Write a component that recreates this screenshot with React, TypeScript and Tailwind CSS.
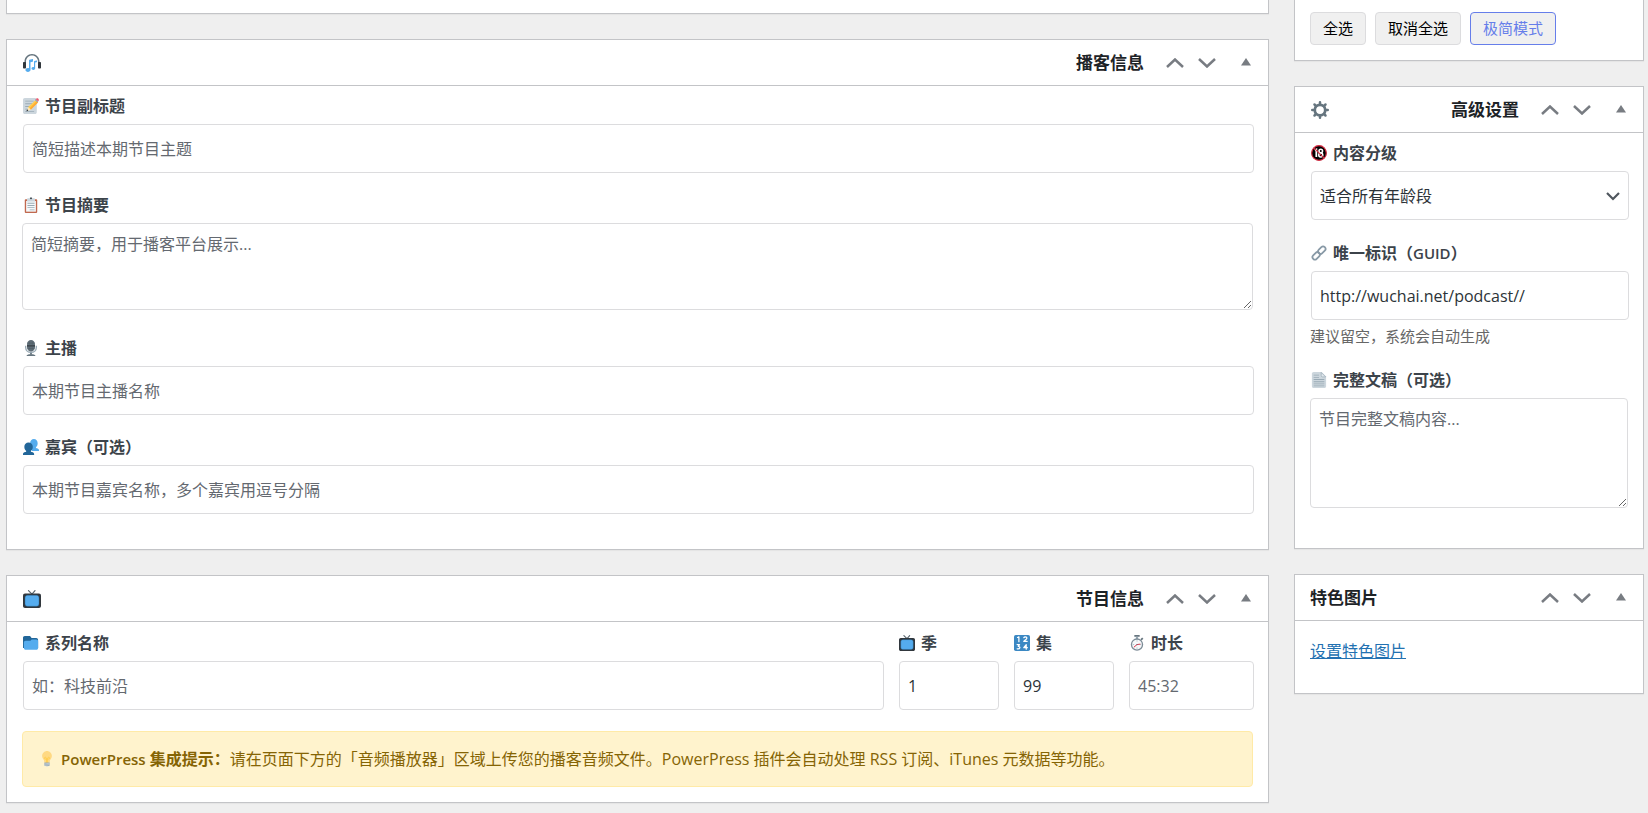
import type { ReactNode } from "react";

const inputClass =
  "ml-px block h-[49px] w-full rounded border border-[#dcdcde] bg-white px-2 text-base text-[#2c3338] placeholder:text-[#646970]";
const textareaClass =
  "block w-full resize-y rounded border border-[#dcdcde] bg-white p-2 text-base leading-6 text-[#2c3338] placeholder:text-[#646970]";

interface EmojiProps {
  large?: boolean;
  children: ReactNode;
}

function Emoji({ large, children }: EmojiProps) {
  return (
    <svg
      viewBox="0 0 36 36"
      aria-hidden="true"
      className={large ? "mx-px size-[18px] shrink-0" : "mx-px size-4 shrink-0"}
    >
      {children}
    </svg>
  );
}

function HeadphoneIcon() {
  return (
    <Emoji large>
      <path
        fill="#66757F"
        d="M18 0C9.716 0 3 6.716 3 15v9h3v-9C6 8 11.269 2.812 18 2.812 24.73 2.812 30 8 30 15v10l3-1v-9c0-8.284-6.716-15-15-15z"
      />
      <path
        fill="#31373D"
        d="M6 27c0 1.104-.896 2-2 2H2c-1.104 0-2-.896-2-2v-9c0-1.104.896-2 2-2h2c1.104 0 2 .896 2 2v9zm30 0c0 1.104-.896 2-2 2h-2c-1.104 0-2-.896-2-2v-9c0-1.104.896-2 2-2h2c1.104 0 2 .896 2 2v9z"
      />
      <path
        fill="#55ACEE"
        d="M19.182 10.016l-6.364 1.313c-.45.093-.818.544-.818 1.004v16.185c-.638-.227-1.341-.36-2.087-.36-2.785 0-5.042 1.755-5.042 3.922 0 2.165 2.258 3.827 5.042 3.827C12.649 35.905 14.922 34 15 32V16.39l4.204-.872c.449-.093.796-.545.796-1.004v-3.832c0-.458-.368-.759-.818-.666zm8 3.151l-4.297.865c-.45.093-.885.544-.885 1.003V26.44c0-.152-.878-.24-1.4-.24-2.024 0-3.633 1.276-3.633 2.852 0 1.574 1.658 2.851 3.683 2.851s3.677-1.277 3.677-2.851V17.035l2.875-.594c.45-.093.798-.545.798-1.005v-1.603c0-.459-.368-.76-.818-.666z"
      />
    </Emoji>
  );
}

function MemoIcon() {
  return (
    <Emoji>
      <path fill="#CCD6DD" d="M31 32c0 2.209-1.791 4-4 4H4c-2.209 0-4-1.791-4-4V4c0-2.209 1.791-4 4-4h23c2.209 0 4 1.791 4 4v28z" />
      <path fill="#99AAB5" d="M5 6h19v2H5zM5 12h16v2H5zM5 18h11v2H5zM5 24h7v2H5zM5 29h20v2H5z" />
      <path fill="#FFCC4D" d="M29 4l5 5-17 17-6-5z" />
      <path fill="#FFAC33" d="M31 7l3 3-17 17-3-3z" />
      <path fill="#99AAB5" d="M26.5 4.5l2-2L34 8l-2 2z" />
      <path fill="#EA596E" d="M28.5 2.5C30.5.5 33 0 34.5 1.5S36 5.5 34 8z" />
      <path fill="#FFE8B6" d="M11 20l7 6-8.5 3.5z" />
      <path fill="#292F33" d="M9.4 25.5l2.600 3-4.5 1.5z" />
    </Emoji>
  );
}

function ClipboardIcon() {
  return (
    <Emoji>
      <path fill="#C1694F" d="M32 34c0 1.104-.896 2-2 2H6c-1.104 0-2-.896-2-2V7c0-1.104.896-2 2-2h24c1.104 0 2 .896 2 2v27z" />
      <path fill="#F5F8FA" d="M7 9h22v24H7z" />
      <path fill="#CCD6DD" d="M25 3h-4c0-1.657-1.343-3-3-3s-3 1.343-3 3h-4c-1.104 0-2 .896-2 2v5h18V5c0-1.104-.896-2-2-2z" />
      <circle fill="#292F33" cx="18" cy="3" r="2" />
      <path fill="#99AAB5" d="M10 13h16v2H10zM10 18h16v2H10zM10 23h16v2H10zM15 28h11v2H15z" />
    </Emoji>
  );
}

function MicrophoneIcon() {
  return (
    <Emoji>
      <path fill="#66757F" d="M16 27h4v6h-4z" />
      <path fill="#66757F" d="M8 36c0-2.5 3-4 10-4s10 1.5 10 4z" />
      <path fill="none" stroke="#99AAB5" strokeWidth="3" d="M6 13v4c0 6.5 5 11 12 11s12-4.5 12-11v-4" />
      <path fill="#66757F" d="M18 0c-5 0-9 4-9 9v8c0 5 4 9 9 9s9-4 9-9V9c0-5-4-9-9-9z" />
      <path fill="#292F33" d="M9 12h18v2.5H9z" />
      <path stroke="#4B575F" strokeWidth="1.2" d="M14 2v22M18 0v26M22 2v22M10 7h16M10 19h16" />
    </Emoji>
  );
}

function BustsIcon() {
  return (
    <Emoji>
      <path
        fill="#55ACEE"
        d="M36 27v-2c0-2-2-3-5-4-1.5-.5-2-1.5-2-2.5 2.5-1.7 4-4.8 4-9C33 4 29.5 0 24.5 0S16 4 16 9.5c0 4 1 7 4 9v8.5z"
      />
      <path
        fill="#226699"
        d="M0 36v-2c0-2.5 2-3.5 5-4.5 2-.6 2.5-1.5 2.5-2.5C4.5 25.3 3 22 3 17.5 3 12 7 8 12.500 8S22 12 22 17.5c0 4.5-1.5 7.8-4.5 9.5 0 1 .5 1.9 2.5 2.5 3 1 5 2 5 4.5v2z"
      />
    </Emoji>
  );
}

function TvIcon({ large }: { large?: boolean }) {
  return (
    <Emoji large={large}>
      <path fill="none" stroke="#58656E" strokeWidth="2.4" strokeLinecap="round" d="M11 1.2l7 7 6-7" />
      <path fill="#31373D" d="M36 32c0 2.209-1.791 4-4 4H4c-2.209 0-4-1.791-4-4V11c0-2.209 1.791-4 4-4h28c2.209 0 4 1.791 4 4z" />
      <path
        fill="#55ACEE"
        stroke="#226699"
        strokeWidth=".8"
        d="M32 27c0 4-2 5.5-5 5.5H9c-3 0-5-1.5-5-5.5V16c0-4 2-5.5 5-5.5h18c3 0 5 1.5 5 5.5z"
      />
    </Emoji>
  );
}

function FolderIcon() {
  return (
    <Emoji>
      <path fill="#226699" d="M0 29V6c0-2.2 1.8-4 4-4h10c2.2 0 3 1 4 3s2 2 4 2h8c2 0 4 2 4 4v18z" />
      <path fill="#55ACEE" d="M30 10H20c-2 0-2 3-5 3H6c-2.2 0-4 1.8-4 4v12c0 2.2 1.8 4 4 4h24c2.2 0 4-1.8 4-4V14c0-2.2-1.8-4-4-4z" />
    </Emoji>
  );
}

function NumbersIcon() {
  return (
    <Emoji>
      <rect width="36" height="36" rx="4" fill="#3B88C3" />
      <g fill="none" stroke="#fff" strokeWidth="2.8" strokeLinecap="round" strokeLinejoin="round">
        <path d="M8 5.5L11 4v11" />
        <path d="M22 6c1-2.5 7-3 7 .5 0 3-4 4.5-7 8h7.5" />
        <path d="M7 21.5h5.5l-3 4c6 0 4.5 7-2.5 5.5" />
        <path d="M27.5 32V21.5l-5.5 7h8" />
      </g>
    </Emoji>
  );
}

function StopwatchIcon() {
  return (
    <Emoji>
      <path fill="#66757F" d="M12 0h12v4H12z" />
      <path fill="#99AAB5" d="M15.5 4h5v5h-5z" />
      <path stroke="#66757F" strokeWidth="4" d="M27 11l4-4" />
      <circle cx="18" cy="21.5" r="12.5" fill="#F5F8FA" stroke="#7D8C97" strokeWidth="3" />
      <path stroke="#99AAB5" strokeWidth="1.5" d="M18 12v3M18 28v3M8.5 21.5h3M24.5 21.5h3" />
      <path fill="none" stroke="#DD2E44" strokeWidth="2.2" d="M11 27.5l7-6 7.5-1" />
      <circle cx="18" cy="21.5" r="1.5" fill="#66757F" />
    </Emoji>
  );
}

function BulbIcon() {
  return (
    <Emoji>
      <path
        fill="#FFD983"
        d="M29 11.06c0 6.439-5 7.439-5 13.44 0 3.098-3.123 3.359-5.5 3.359-2.053 0-6.586-.779-6.586-3.361C11.914 18.5 7 17.5 7 11.06 7 5.029 12.285.14 18.083.14 23.883.14 29 5.029 29 11.06z"
      />
      <path fill="#CCD6DD" d="M22.167 32.5c0 .828-2.234 2.5-4.167 2.5s-4.167-1.672-4.167-2.5 2.233-.5 4.167-.5c1.933 0 4.167-.328 4.167.5z" />
      <path
        fill="none"
        stroke="#FFCC4D"
        strokeWidth="2"
        strokeLinecap="round"
        d="M17 27v-9c0-1.5-1-4-2.5-4S12 15 12 16s1 2 2.5 2h7c1.5 0 2.5-1 2.5-2s-1-2-2.5-2S19 16.5 19 18v9"
      />
      <path fill="#99AAB5" d="M12 26h12v6c0 1-1 2-2 2h-8c-1 0-2-1-2-2z" />
      <path stroke="#CCD6DD" strokeWidth="1.5" d="M12 29.5l12-2M12 32.5l12-2" />
    </Emoji>
  );
}

function GearIcon() {
  return (
    <Emoji large>
      <g fill="none" stroke="#66757F">
        <circle cx="18" cy="18" r="10.5" strokeWidth="5.5" />
        <path
          strokeWidth="5"
          strokeLinecap="round"
          d="M18 2.5V7M18 29v4.5M2.5 18H7M29 18h4.5M7 7l3.2 3.2M25.8 25.8L29 29M7 29l3.2-3.2M25.8 10.2L29 7"
        />
      </g>
    </Emoji>
  );
}

function AdultsOnlyIcon() {
  return (
    <Emoji>
      <circle cx="18" cy="18" r="17" fill="#000" />
      <g fill="none" stroke="#fff">
        <path strokeWidth="4" d="M8.5 12l3.5-2v17" />
        <circle cx="22" cy="13.5" r="4" strokeWidth="3.5" />
        <circle cx="22" cy="22.5" r="4.5" strokeWidth="3.5" />
      </g>
      <g fill="none" stroke="#DD2E44" strokeWidth="2.5">
        <circle cx="18" cy="18" r="16.5" />
        <path d="M7 7l22 22" />
      </g>
    </Emoji>
  );
}

function LinkIcon() {
  return (
    <Emoji>
      <g fill="none" stroke="#8899A6" strokeWidth="4">
        <rect x="-9.5" y="-5.5" width="19" height="11" rx="5.5" transform="translate(24.3 11.7) rotate(-45)" />
        <rect x="-9.5" y="-5.5" width="19" height="11" rx="5.5" transform="translate(11.7 24.3) rotate(-45)" />
      </g>
    </Emoji>
  );
}

function PageIcon() {
  return (
    <Emoji>
      <path fill="#CCD6DD" d="M24 0H6C3.8 0 2 1.8 2 4v28c0 2.2 1.8 4 4 4h24c2.2 0 4-1.8 4-4V10z" />
      <path fill="#E1E8ED" stroke="#99AAB5" strokeWidth="1.5" d="M23 1v7c0 2 1 3 3 3h7z" />
      <path fill="#99AAB5" d="M6 6h12v1.8H6zM6 11h12v1.8H6zM6 16h24v1.8H6zM6 21h24v1.8H6zM6 26h24v1.8H6zM6 30.5h24V32H6z" />
    </Emoji>
  );
}

interface PanelProps {
  title: string;
  icon?: ReactNode;
  children: ReactNode;
}

function Panel({ title, icon, children }: PanelProps) {
  return (
    <section className="border border-[#c3c4c7] bg-white shadow-[0_1px_1px_rgba(0,0,0,0.04)]">
      <header className="flex h-[46px] items-stretch border-b border-[#c3c4c7]">
        <h2 className="flex flex-1 items-center justify-between px-[15px] text-[17px] font-semibold text-[#1d2327]">
          {icon}
          {title}
        </h2>
        <button type="button" aria-label="上移" className="flex w-8 items-center justify-center text-[#787c82]">
          <svg viewBox="0 0 18 10" className="h-2.5 w-[18px]" fill="none" stroke="currentColor" strokeWidth="2.5">
            <path d="M1 9l8-7.5L17 9" />
          </svg>
        </button>
        <button type="button" aria-label="下移" className="flex w-8 items-center justify-center text-[#787c82]">
          <svg viewBox="0 0 18 10" className="h-2.5 w-[18px]" fill="none" stroke="currentColor" strokeWidth="2.5">
            <path d="M1 1l8 7.5L17 1" />
          </svg>
        </button>
        <button type="button" aria-label="切换面板" className="flex w-[45px] items-center justify-center text-[#787c82]">
          <svg viewBox="0 0 10 10" className="size-2.5" fill="currentColor">
            <path d="M5 0l5 7.5H0z" />
          </svg>
        </button>
      </header>
      {children}
    </section>
  );
}

interface FieldProps {
  id: string;
  icon: ReactNode;
  label: ReactNode;
  children: ReactNode;
}

function Field({ id, icon, label, children }: FieldProps) {
  return (
    <div>
      <label
        htmlFor={id}
        className="mb-1.5 flex h-[25px] items-center gap-[5px] text-base font-semibold text-[#3c434a]"
      >
        {icon}
        <span>{label}</span>
      </label>
      {children}
    </div>
  );
}

function App() {
  return (
    <div className="grid min-h-screen grid-cols-[minmax(0,1fr)_350px] items-start gap-x-[25px] bg-[#efefef] pr-1 pl-1.5 font-['Open_Sans','Noto_Sans_CJK_SC',sans-serif]">
      <main className="flex flex-col gap-[25px]">
        <div className="h-3.5 border border-t-0 border-[#c3c4c7] bg-white shadow-[0_1px_1px_rgba(0,0,0,0.04)]" />

        <Panel title="播客信息" icon={<HeadphoneIcon />}>
          <div className="flex flex-col gap-[19px] px-[15px] pt-[7px] pb-[35px]">
            <Field id="subtitle" icon={<MemoIcon />} label="节目副标题">
              <input id="subtitle" type="text" placeholder="简短描述本期节目主题" className={inputClass} />
            </Field>
            <Field id="summary" icon={<ClipboardIcon />} label="节目摘要">
              <textarea
                id="summary"
                placeholder="简短摘要，用于播客平台展示..."
                className={`${textareaClass} mb-1.5 h-[87px]`}
              />
            </Field>
            <Field id="host" icon={<MicrophoneIcon />} label="主播">
              <input id="host" type="text" placeholder="本期节目主播名称" className={inputClass} />
            </Field>
            <Field id="guests" icon={<BustsIcon />} label="嘉宾（可选）">
              <input
                id="guests"
                type="text"
                placeholder="本期节目嘉宾名称，多个嘉宾用逗号分隔"
                className={inputClass}
              />
            </Field>
          </div>
        </Panel>

        <Panel title="节目信息" icon={<TvIcon large />}>
          <div className="px-[15px] pt-2 pb-[15px]">
            <div className="grid grid-cols-[minmax(0,1fr)_100px_100px_125px] gap-[15px]">
              <Field id="series" icon={<FolderIcon />} label="系列名称">
                <input id="series" type="text" placeholder="如：科技前沿" className={inputClass} />
              </Field>
              <Field id="season" icon={<TvIcon />} label="季">
                <input id="season" type="number" defaultValue={1} className={inputClass} />
              </Field>
              <Field id="episode" icon={<NumbersIcon />} label="集">
                <input id="episode" type="number" defaultValue={99} className={inputClass} />
              </Field>
              <Field id="duration" icon={<StopwatchIcon />} label="时长">
                <input id="duration" type="text" placeholder="45:32" className={inputClass} />
              </Field>
            </div>

            {/* PowerPress notice */}
            <div className="mt-[21px] flex h-14 items-center gap-[5px] rounded border border-[#ffeaa7] bg-[#fff3cd] px-[15px] text-base text-[#856404]">
              <BulbIcon />
              <p>
                <strong className="font-semibold">
                  <span className="text-[15px]">PowerPress</span> 集成提示：
                </strong>
                请在页面下方的「音频播放器」区域上传您的播客音频文件。PowerPress 插件会自动处理 RSS 订阅、iTunes
                元数据等功能。
              </p>
            </div>
          </div>
        </Panel>
      </main>

      <aside className="flex flex-col gap-[25px]">
        <div className="flex gap-[9px] border border-t-0 border-[#c3c4c7] bg-white px-[15px] pt-3 pb-[15px] text-[15px] shadow-[0_1px_1px_rgba(0,0,0,0.04)]">
          <button type="button" className="h-[33px] rounded border border-[#dcdcde] bg-[#f0f0f0] px-3 text-black">
            全选
          </button>
          <button type="button" className="h-[33px] rounded border border-[#dcdcde] bg-[#f0f0f0] px-3 text-black">
            取消全选
          </button>
          <button type="button" className="h-[33px] rounded border border-[#667eea] bg-[#f0f0f0] px-3 text-[#667eea]">
            极简模式
          </button>
        </div>

        <Panel title="高级设置" icon={<GearIcon />}>
          <div className="flex flex-col gap-5 px-[15px] pt-[7px] pb-10">
            <Field id="rating" icon={<AdultsOnlyIcon />} label="内容分级">
              <div className="relative">
                <select id="rating" className={`${inputClass} appearance-none`}>
                  <option>适合所有年龄段</option>
                </select>
                <svg
                  viewBox="0 0 14 10"
                  aria-hidden="true"
                  className="pointer-events-none absolute top-5 right-2 h-2.5 w-3.5"
                  fill="none"
                  stroke="#50575e"
                  strokeWidth="2.2"
                >
                  <path d="M1 2l6 6 6-6" />
                </svg>
              </div>
            </Field>
            <Field
              id="guid"
              icon={<LinkIcon />}
              label={
                <>
                  唯一标识（<span className="text-[15px]">GUID</span>）
                </>
              }
            >
              <input id="guid" type="text" defaultValue="http://wuchai.net/podcast//" className={inputClass} />
              <p className="mt-[5px] text-[15px] leading-[22px] text-[#666]">建议留空，系统会自动生成</p>
            </Field>
            <Field id="transcript" icon={<PageIcon />} label="完整文稿（可选）">
              <textarea
                id="transcript"
                placeholder="节目完整文稿内容..."
                className={`${textareaClass} h-[110px]`}
              />
            </Field>
          </div>
        </Panel>

        <Panel title="特色图片">
          <div className="px-[15px] pt-[18px] pb-[30px]">
            <a href="#featured-image" className="text-base leading-6 text-[#2271b1] underline">
              设置特色图片
            </a>
          </div>
        </Panel>
      </aside>
    </div>
  );
}

export default App;
